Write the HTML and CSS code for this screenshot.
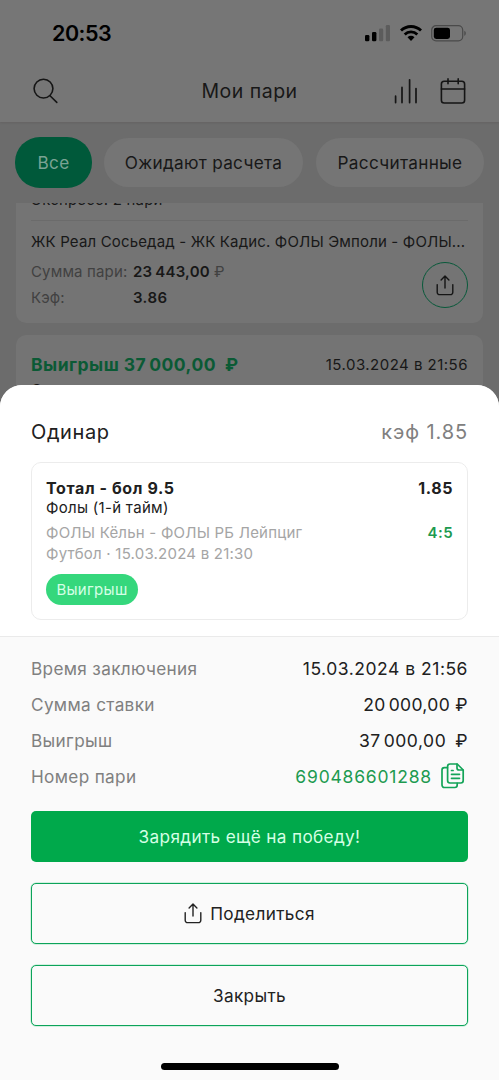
FILE: index.html
```html
<!DOCTYPE html>
<html lang="ru">
<head>
<meta charset="utf-8">
<title>Мои пари</title>
<link rel="stylesheet" href="styles.css">
</head>
<body>
<div class="screen">
  <header class="header">
    <div class="status">
      <span class="clock">20:53</span>
      <span class="status-icons">
        <svg width="26" height="17" viewBox="0 0 26 17"><rect x="0" y="10" width="4.4" height="6.2" rx="1.3"/><rect x="7" y="7" width="4.4" height="9.2" rx="1.3"/><rect x="14" y="3.6" width="4.2" height="12.6" rx="1.3" fill="#5c5c5c"/><rect x="20.8" y="0" width="4.2" height="16.2" rx="1.3" fill="#5c5c5c"/></svg>
        <svg width="22" height="17" viewBox="0 0 22 17" fill="none" stroke="#000" stroke-width="2.8"><path d="M1 5.6a14.2 14.2 0 0 1 20 0"/><path d="M4.7 9.4a9 9 0 0 1 12.6 0"/><path d="M7.5 12.3a5 5 0 0 1 7 0L11 16z" fill="#000" stroke="none"/></svg>
        <svg width="36" height="17" viewBox="0 0 36 17"><rect x=".7" y=".7" width="31" height="15.2" rx="4.4" fill="none" stroke="#4a4a4a" stroke-width="1.2"/><rect x="2.8" y="2.7" width="16.2" height="11.3" rx="2.4"/><path d="M33.3 5.8c2 .7 2 4.4 0 5z" fill="#4a4a4a"/></svg>
      </span>
    </div>
    <div class="nav">
      <svg class="icon-search" width="26" height="27" viewBox="0 0 26 27" fill="none" stroke="#151515" stroke-width="1.6" stroke-linecap="round"><circle cx="10.5" cy="10.6" r="9.4"/><path d="M17 17.8l6.8 6.6"/></svg>
      <h1 class="title">Мои пари</h1>
      <div class="nav-actions">
        <svg width="24" height="27" viewBox="0 0 24 27" fill="none" stroke="#151515" stroke-width="1.7" stroke-linecap="round"><path d="M1.6 18.2V24.6M8 9.4V24.6M15.6 1.8V24.6M22 10.6V24.6"/></svg>
        <svg width="26" height="27" viewBox="0 0 26 27" fill="none" stroke="#151515" stroke-width="1.6" stroke-linecap="round"><rect x="1.4" y="3.2" width="23.2" height="21.8" rx="2.8"/><path d="M1.4 11h23.2M8 .9v4.8M18.2 .9v4.8"/></svg>
      </div>
    </div>
  </header>

  <nav class="tabs">
    <span class="tab tab-active">Все</span>
    <span class="tab tab-wait">Ожидают расчета</span>
    <span class="tab tab-done">Рассчитанные</span>
  </nav>

  <main class="bets">
    <article class="bet bet-first">
      <div class="bet-type"><span>Экспресс: 2 пари</span></div>
      <div class="bet-events">ЖК Реал Сосьедад - ЖК Кадис. ФОЛЫ Эмполи - ФОЛЫ...</div>
      <div class="bet-bottom">
        <dl class="bet-facts">
          <dt>Сумма пари:</dt><dd><b class="sum">23<i class="thin"></i>443,00</b> <span class="rub">₽</span></dd>
          <dt>Кэф:</dt><dd><b>3.86</b></dd>
        </dl>
        <span class="share-round"><svg width="18" height="21" viewBox="0 0 18 21" fill="none" stroke="#151515" stroke-width="1.4" stroke-linecap="round" stroke-linejoin="round"><path d="M1.2 9.6v7.6a2.4 2.4 0 0 0 2.4 2.4h10.8a2.4 2.4 0 0 0 2.4-2.4V9.6M9 13V1.3M5.1 4.9L9 1l3.9 3.9"/></svg></span>
      </div>
    </article>
    <article class="bet bet-second">
      <div class="bet-head"><b class="bet-win">Выигрыш 37<i class="thin"></i>000,00<i class="wide"></i>₽</b><time class="bet-time">15.03.2024 в 21:56</time></div>
      <div class="bet-kind">Одинар</div>
    </article>
  </main>

  <section class="sheet">
    <div class="sheet-top">
      <div class="sheet-head"><h2 class="sheet-title">Одинар</h2><span class="sheet-coef">кэф 1.85</span></div>
      <div class="event">
        <div class="row outcome"><b>Тотал - бол 9.5</b><b>1.85</b></div>
        <div class="market">Фолы (1-й тайм)</div>
        <div class="row teams"><span class="teams-name">ФОЛЫ Кёльн - ФОЛЫ РБ Лейпциг</span><span class="score">4:5</span></div>
        <div class="sport">Футбол · 15.03.2024 в 21:30</div>
        <span class="badge">Выигрыш</span>
      </div>
    </div>
    <div class="sheet-body">
      <div class="row info"><span class="label">Время заключения</span><span>15.03.2024 в 21:56</span></div>
      <div class="row info"><span class="label">Сумма ставки</span><span class="stake">20<i class="thin"></i>000,00 ₽</span></div>
      <div class="row info"><span class="label">Выигрыш</span><span>37<i class="thin"></i>000,00<i class="wide"></i>₽</span></div>
      <div class="row info"><span class="label">Номер пари</span><span class="bet-id"><span class="bet-number">690486601288</span><svg width="24" height="26" viewBox="0 0 24 26" fill="none" stroke="#13a458" stroke-width="1.7" stroke-linecap="round" stroke-linejoin="round"><path d="M9 1h7.2l6 6v10.6a2.4 2.4 0 0 1-2.4 2.4H9a2.4 2.4 0 0 1-2.4-2.4V3.4A2.4 2.4 0 0 1 9 1z"/><path d="M16 1.2V5a2 2 0 0 0 2 2h4M6.4 4.7H3.4A2.4 2.4 0 0 0 1 7.1v15a2.4 2.4 0 0 0 2.4 2.4h10.4a2.4 2.4 0 0 0 2.4-2.4V20.4M10.5 7.5h1.6M10.5 11.3h8M10.5 15.3h8"/></svg></span></div>
      <div class="buttons">
        <button class="btn btn-primary">Зарядить ещё на победу!</button>
        <button class="btn"><svg width="18" height="21" viewBox="0 0 18 21" fill="none" stroke="#222" stroke-width="1.4" stroke-linecap="round" stroke-linejoin="round"><path d="M1.2 9.6v7.6a2.4 2.4 0 0 0 2.4 2.4h10.8a2.4 2.4 0 0 0 2.4-2.4V9.6M9 13V1.3M5.1 4.9L9 1l3.9 3.9"/></svg><span>Поделиться</span></button>
        <button class="btn">Закрыть</button>
      </div>
      <div class="home"></div>
    </div>
  </section>
</div>
</body>
</html>
```
FILE: styles.css
```css
* { box-sizing: border-box; margin: 0; padding: 0; }
body { font-family: Inter, "Liberation Sans", sans-serif; color: #202020; }
svg { display: block; flex: none; }
i.thin { display: inline-block; width: 3px; }
i.wide { display: inline-block; width: 9px; }
.screen { position: relative; width: 499px; height: 1080px; overflow: hidden; background: #6c6c6c; white-space: nowrap; }
.row { display: flex; justify-content: space-between; }

.header { height: 122px; background: #767676; box-shadow: 0 1px 2px rgba(60, 50, 50, .15); }
.status { height: 66px; display: flex; justify-content: space-between; padding: 0 32px 0 52px; align-items: center; }
.clock { font-size: 21.5px; font-weight: 600; color: #000; letter-spacing: -.5px; }
.status-icons { display: flex; gap: 9px; }
.nav { height: 50px; display: flex; align-items: center; justify-content: space-between; padding: 0 33px; }
.nav-actions { display: flex; gap: 22px; }
.icon-search { margin-right: 46px; }
.title { font-size: 19.5px; font-weight: 400; color: #181818; letter-spacing: .5px; }

.tabs { height: 81px; display: flex; align-items: center; padding: 0 15px; gap: 12px; }
.tab { height: 49px; border-radius: 25px; background: #757575; color: #181818; font-size: 17.2px; display: flex; align-items: center; justify-content: center; letter-spacing: .3px; flex: none; }
.tab-active { width: 77px; height: 51px; background: #00593a; color: #7aa394; }
.tab-wait { width: 199px; }
.tab-done { width: 168px; margin-left: 1px; }

.bets { display: flex; flex-direction: column; gap: 12px; padding: 0 16px; }
.bet { background: #747474; padding: 0 15px; font-size: 15px; color: #181818; }
.bet-first { height: 120px; border-radius: 0 0 10px 10px; }
.bet-type { height: 18px; border-bottom: 1px solid #6b6b6b; overflow: hidden; display: flex; align-items: flex-start; letter-spacing: .2px; }
.bet-type span { margin-top: -12px; line-height: 18px; }
.bet-events { line-height: 20px; margin-top: 11px; letter-spacing: .16px; }
.bet-bottom { display: flex; justify-content: space-between; }
.bet-facts { display: grid; grid-template-columns: 102px auto; line-height: 26px; margin-top: 7px; }
.bet-facts dt { color: #414141; letter-spacing: .15px; }
.bet-facts b { font-weight: 600; letter-spacing: .4px; }
.bet-facts .sum { letter-spacing: .2px; }
.rub { color: #414141; }
.share-round { width: 46px; height: 46px; margin-top: 10px; border: 1px solid #08593a; border-radius: 50%; display: flex; align-items: center; justify-content: center; }
.bet-second { height: 100px; border-radius: 10px; padding-top: 17px; }
.bet-head { display: flex; justify-content: space-between; align-items: center; height: 24px; }
.bet-win { font-size: 17.5px; font-weight: 700; color: #0b5a35; letter-spacing: .48px; }
.bet-time { letter-spacing: .48px; }
.bet-kind { line-height: 20px; margin-top: 4px; }

.sheet { position: absolute; left: 0; right: 0; top: 385px; bottom: 0; border-radius: 22px 22px 0 0; background: #fafafa; overflow: hidden; }
.sheet-top { height: 252px; background: #fff; border-bottom: 1px solid #eaeaea; padding: 33px 31px 0; }
.sheet-head { display: flex; justify-content: space-between; align-items: center; height: 28px; font-size: 20px; }
.sheet-title { font-size: 20px; font-weight: 400; letter-spacing: .6px; }
.sheet-coef { color: #808080; letter-spacing: .9px; }
.event { height: 158px; margin-top: 16px; border: 1px solid #ececec; border-radius: 10px; padding: 15px 14px 0; font-size: 15px; }
.outcome { font-size: 16px; line-height: 21px; letter-spacing: .6px; }
.outcome b { font-weight: 700; }
.market { line-height: 18px; letter-spacing: .3px; }
.teams { margin-top: 5px; line-height: 21px; }
.teams-name, .sport { color: #a5a5a5; letter-spacing: .22px; }
.score { color: #1d9a50; font-weight: 600; letter-spacing: .4px; }
.sport { line-height: 21px; }
.badge { display: flex; width: 92px; height: 31px; margin-top: 10px; border-radius: 16px; background: #35d77c; color: #d6ffe6; align-items: center; justify-content: center; letter-spacing: .3px; }

.sheet-body { padding: 13px 31px 0; }
.info { height: 36px; align-items: center; font-size: 17.5px; letter-spacing: .52px; }
.label { color: #808080; font-size: 17.2px; letter-spacing: .33px; }
.stake { letter-spacing: .35px; }
.bet-id { display: flex; align-items: center; gap: 9px; padding-right: 3px; color: #1d9a50; }
.bet-number { letter-spacing: .8px; }
.buttons { display: flex; flex-direction: column; gap: 21px; margin-top: 17px; }
.btn { height: 61px; border: 1px solid #0ca35a; box-shadow: 0 0 0 .5px #a9e6c6; border-radius: 5px; background: #fafafa; font: 17.2px Inter, "Liberation Sans", sans-serif; color: #222; letter-spacing: .35px; display: flex; align-items: center; justify-content: center; gap: 8px; }
.btn-primary { height: 51px; border: 0; box-shadow: none; background: #00a94b; color: #d5ffe4; }
.home { width: 178px; height: 7px; margin: 37px auto 0; border-radius: 4px; background: #000; }
```
